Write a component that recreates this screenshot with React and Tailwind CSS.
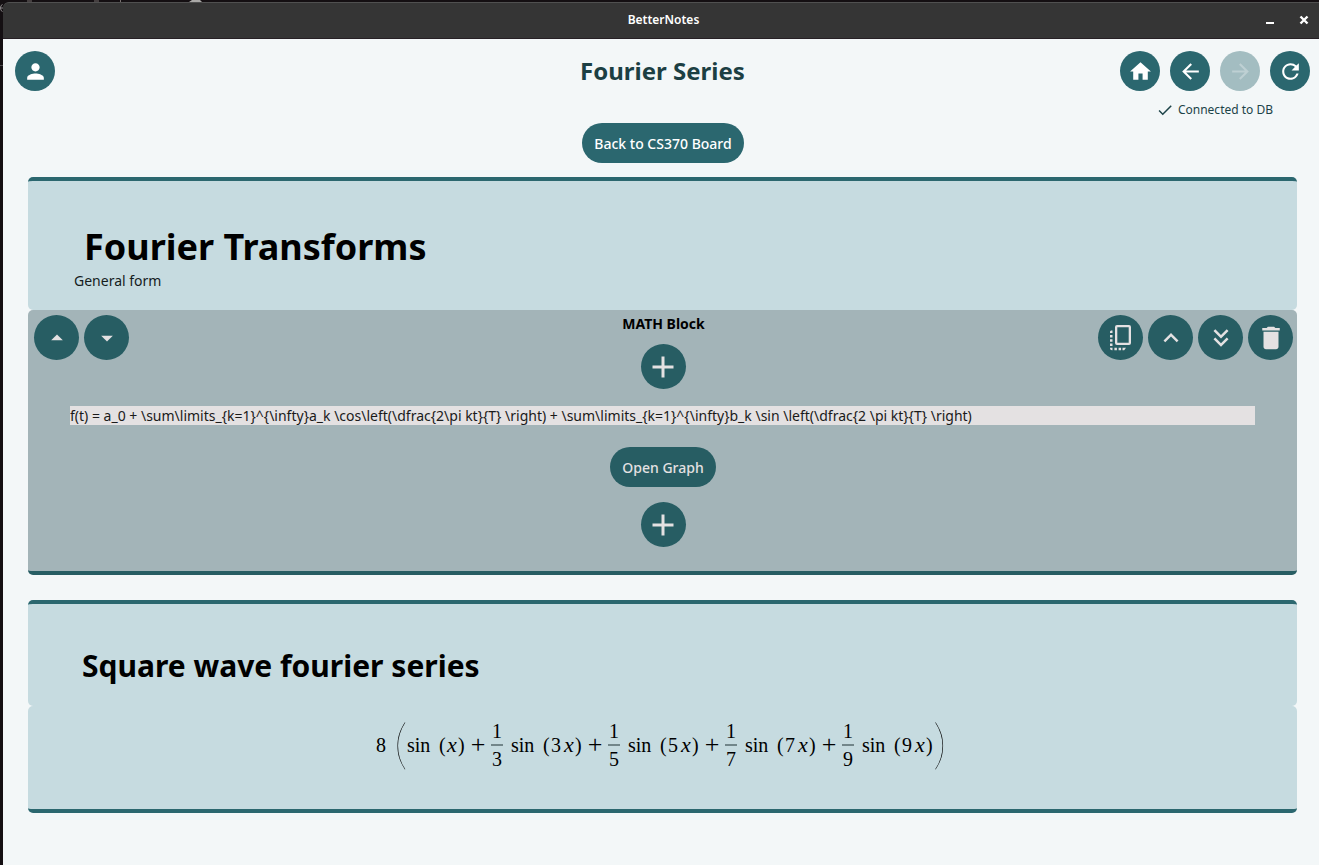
import {
  MdPerson, MdHome, MdArrowBack, MdArrowForward, MdRefresh, MdCheck, MdArrowDropUp,
  MdArrowDropDown, MdKeyboardArrowUp, MdKeyboardDoubleArrowDown, MdDelete, MdAdd,
} from "react-icons/md";

function NavButton({ label, icon: Icon, disabled = false }) {
  return (
    <button
      type="button"
      aria-label={label}
      disabled={disabled}
      className="flex size-10 shrink-0 items-center justify-center rounded-full bg-[#2b676f] text-white disabled:bg-[#a3bdc1] disabled:text-[#bed0d3]"
    >
      <Icon className="size-[25px]" />
    </button>
  );
}

function BlockButton({ label, children }) {
  return (
    <button
      type="button"
      aria-label={label}
      className="flex size-[45px] shrink-0 items-center justify-center rounded-full bg-[#275d63] text-[#e4e1e2]"
    >
      {children}
    </button>
  );
}

function BringToFrontIcon() {
  return (
    <svg viewBox="0 0 24 28" className="h-7 w-6" fill="currentColor" aria-hidden="true">
      <path
        fillRule="evenodd"
        d="M8 1h12a2 2 0 0 1 2 2v16a2 2 0 0 1-2 2H8a2 2 0 0 1-2-2V3a2 2 0 0 1 2-2Zm.3 2.300v15.400h11.400v-15.400Z"
      />
      <path d="M1 7.500L2 6.500h1.500V9H1zM1 11h2.500v2.500H1zM1 15.200h2.500v2.500H1zM1 19.500h2.500V22H1zM1 23.800h2.500v2.500H3a2 2 0 0 1-2-2zM5.400 23.800h2.500v2.500H5.400zM9.600 23.800h2.500v2.500H9.600zM13.500 23.800H17l-1.800 2.500h-1.700z" />
    </svg>
  );
}

function Backdrop() {
  return (
    <svg width="220" height="72" viewBox="0 0 220 72" className="pointer-events-none absolute top-0 left-0" aria-hidden="true">
      <path d="M27 1h5M94 1h5M120.500 0v2" stroke="#77706f" />
      <path d="M189 2l3-2h8l2 2z" fill="#a9a8a6" />
      <path d="M2.500 4.500Q.5 5 .5 8t2 3.500M0 8h3" stroke="#8a8688" fill="none" />
      <path d="M0 65.500h3" stroke="#4b484b" />
    </svg>
  );
}

function TitleBar() {
  return (
    <header className="relative grid h-[37px] grid-cols-[1fr_auto_1fr] items-center rounded-tl-md border-t border-b border-t-[#505050] border-b-[#272025] bg-[#353535] pr-[7px] pb-px pl-3 text-white">
      <span />
      <p className="text-xs font-semibold">BetterNotes</p>
      <div className="flex justify-end gap-[18px]">
        <button type="button" aria-label="Minimize" className="flex size-4 items-center justify-center">
          <svg viewBox="0 0 16 16" className="size-4" aria-hidden="true">
            <path d="M4 10h8v2H4z" fill="currentColor" />
          </svg>
        </button>
        <button type="button" aria-label="Close" className="flex size-4 items-center justify-center">
          <svg viewBox="0 0 16 16" className="size-4" aria-hidden="true">
            <path d="M4.500 4.500l7 7M11.500 4.500l-7 7" stroke="currentColor" strokeWidth="2.400" />
          </svg>
        </button>
      </div>
    </header>
  );
}

function BigParen({ children }) {
  return (
    <span className="w-[13px] pb-1 text-center font-['Lato',sans-serif] text-[54px] leading-[50px] font-thin">
      {children}
    </span>
  );
}

function Term({ factor, coefficient }) {
  return (
    <>
      {factor && (
        <>
          <span className="ml-[5px] w-[16px] text-center text-[26px]">+</span>
          <span className="mr-1 ml-[5px] flex w-3 flex-col items-center">
            <span className="leading-[26px]">1</span>
            <span className="h-[2px] w-full bg-[#72868a]" />
            <span className="leading-[26px]">{factor}</span>
          </span>
        </>
      )}
      <span className={factor ? "ml-1 w-[24px]" : "w-[24px]"}>sin</span>
      <span className="ml-2 w-[8px]">(</span>
      {coefficient && <span className="mr-[3px] w-[10px]">{coefficient}</span>}
      <span className="w-[11px] text-[22px] italic">x</span>
      <span className="w-[7px]">)</span>
    </>
  );
}

function SquareWave() {
  return (
    <div className="flex items-center justify-center pr-[3px] font-['Liberation_Serif',serif] text-[20px] leading-[26px] text-black">
      <span className="mr-2">8</span>
      <BigParen>(</BigParen>
      <Term />
      <Term factor="3" coefficient="3" />
      <Term factor="5" coefficient="5" />
      <Term factor="7" coefficient="7" />
      <Term factor="9" coefficient="9" />
      <BigParen>)</BigParen>
    </div>
  );
}

export default function App() {
  return (
    <div className="relative flex min-h-screen flex-col bg-[#140f12] pt-[2px] pl-[3px] font-['Noto_Sans',sans-serif] text-sm text-[#151c1d]">
      <Backdrop />
      <TitleBar />
      <main className="grow bg-[#f3f7f8] pt-3 pr-[9px] pb-12 pl-3">
        <div className="grid grid-cols-[1fr_auto_1fr] items-center">
          <NavButton label="Profile" icon={MdPerson} />
          <h1 className="text-2xl font-bold text-[#1c3f43]">Fourier Series</h1>
          <nav className="flex justify-end gap-[10px]">
            <NavButton label="Home" icon={MdHome} />
            <NavButton label="Back" icon={MdArrowBack} />
            <NavButton label="Forward" icon={MdArrowForward} disabled />
            <NavButton label="Refresh" icon={MdRefresh} />
          </nav>
        </div>
        <p className="mt-[10px] flex items-center justify-end gap-1 pr-[37px] text-xs leading-4 text-[#1c4348]">
          <MdCheck className="size-[18px]" />
          Connected to DB
        </p>
        <div className="mt-1 flex justify-center pl-px">
          <button type="button" className="h-10 rounded-full bg-[#2b676f] px-3 pt-px font-medium text-white">
            Back to CS370 Board
          </button>
        </div>

        <div className="mx-[13px] mt-[14px] flex flex-col gap-[25px]">
          <section>
            <div className="rounded-[5px] border-t-4 border-[#2b676f] bg-[#c6dbe0] px-[46px] pt-10 pb-5">
              <h2 className="pl-[10px] text-4xl leading-[51px] font-bold text-black">Fourier Transforms</h2>
              <p className="leading-[18px]">General form</p>
            </div>
            <div className="rounded-[5px] border-b-4 border-[#275d63] bg-[#a3b4b8] pt-[5px] pb-6">
              <div className="grid grid-cols-[1fr_auto_1fr] items-start pr-1 pl-[6px]">
                <div className="flex gap-[5px]">
                  <BlockButton label="Move up"><MdArrowDropUp className="size-7" /></BlockButton>
                  <BlockButton label="Move down"><MdArrowDropDown className="size-7" /></BlockButton>
                </div>
                <div className="flex flex-col items-center gap-3">
                  <h3 className="leading-[17px] font-bold text-black">MATH Block</h3>
                  <BlockButton label="Add block above"><MdAdd className="size-9" /></BlockButton>
                </div>
                <div className="flex justify-end gap-[5px]">
                  <BlockButton label="Bring to front"><BringToFrontIcon /></BlockButton>
                  <BlockButton label="Collapse"><MdKeyboardArrowUp className="size-[30px]" /></BlockButton>
                  <BlockButton label="Move to bottom"><MdKeyboardDoubleArrowDown className="size-[30px]" /></BlockButton>
                  <BlockButton label="Delete"><MdDelete className="size-[30px]" /></BlockButton>
                </div>
              </div>
              <div className="mt-[17px] flex px-[42px]">
                <input
                  aria-label="Math expression"
                  className="h-[19px] min-w-0 grow bg-[#e4e1e2] text-sm leading-[19px] text-[#1a1a1a]"
                  defaultValue={"f(t) = a_0 + \\sum\\limits_{k=1}^{\\infty}a_k \\cos\\left(\\dfrac{2\\pi kt}{T} \\right) + \\sum\\limits_{k=1}^{\\infty}b_k \\sin \\left(\\dfrac{2 \\pi kt}{T} \\right)"}
                />
              </div>
              <div className="mt-[22px] flex flex-col items-center gap-[15px] pl-px">
                <button type="button" className="h-10 rounded-full bg-[#275d63] px-3 pt-px font-medium text-[#e4e1e2]">
                  Open Graph
                </button>
                <BlockButton label="Add block below"><MdAdd className="size-9" /></BlockButton>
              </div>
            </div>
          </section>

          <section>
            <div className="rounded-[5px] border-t-4 border-[#2b676f] bg-[#c6dbe0] px-[46px] pt-10 pb-[18px]">
              <h2 className="pl-2 text-3xl leading-[44px] font-bold text-black">Square wave fourier series</h2>
            </div>
            <div className="rounded-[5px] border-b-4 border-[#2b676f] bg-[#c6dbe0] pt-3 pb-[37px]">
              <SquareWave />
            </div>
          </section>
        </div>
      </main>
    </div>
  );
}
